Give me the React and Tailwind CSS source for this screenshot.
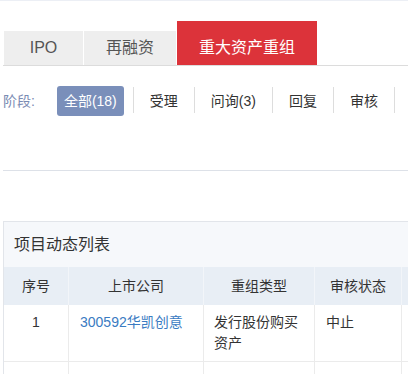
const font = { fontFamily: '"Liberation Sans", "Noto Sans CJK SC", sans-serif' };

const stages = ["受理", "问询(3)", "回复", "审核"];

export default function App() {
  return (
    <div className="h-[374px] w-[408px] overflow-hidden bg-white" style={font}>
      <div className="w-[640px] border-t border-[#eceff5] pl-[3px]">
        {/* tabs */}
        <div className="mt-[20px] flex items-end border-b border-[#dcdcdc] pl-px">
          <div className="mr-px h-[34px] w-[79px] bg-[#eeeeee] text-center text-[16px] leading-[34px] text-[#555]">
            IPO
          </div>
          <div className="mr-px h-[34px] w-[92px] bg-[#eeeeee] text-center text-[16px] leading-[34px] text-[#555]">
            再融资
          </div>
          <div className="h-[44px] w-[140px] bg-[#dc333a] pt-[10px] text-center text-[16px] leading-[34px] text-white">
            重大资产重组
          </div>
        </div>

        {/* stage filter */}
        <div className="mt-[20px] flex items-start text-[14px]">
          <span className="h-[30px] leading-[30px] text-[#7b8bb3]">阶段:</span>
          <span className="ml-[22px] h-[30px] rounded-[3px] bg-[#7a8fba] px-[7px] leading-[30px] text-white">
            全部(18)
          </span>
          <div className="ml-[9px] flex">
            {stages.map((s) => (
              <span
                key={s}
                className="mt-px h-[26px] border-l border-[#dddddd] px-4 leading-[28px] text-[#333]"
              >
                {s}
              </span>
            ))}
            <span className="mt-px h-[26px] border-l border-[#dddddd]" />
          </div>
        </div>

        <div className="mt-[54px] border-t border-[#dde1e8]" />

        {/* project list card */}
        <div className="mt-[50px] border border-[#e2e5ea]">
          <div className="h-[45px] bg-[#f6f8fb] pl-[10px] text-[16px] leading-[45px] text-[#333]">
            项目动态列表
          </div>
          <div className="grid grid-cols-[65px_135px_111px_87px_1fr] bg-[#e8eef5] text-center text-[14px] leading-[38px] text-[#333]">
            <div className="border-r border-[#f2f5f9]">序号</div>
            <div className="border-r border-[#f2f5f9]">上市公司</div>
            <div className="border-r border-[#f2f5f9]">重组类型</div>
            <div className="border-r border-[#f2f5f9]">审核状态</div>
            <div />
          </div>
          <div className="grid h-[57px] grid-cols-[65px_135px_111px_87px_1fr] border-b border-[#ebebeb] text-[14px] leading-[21px] text-[#333]">
            <div className="border-r border-[#ebebeb] pt-[7px] text-center">1</div>
            <div className="border-r border-[#ebebeb] px-[11px] pt-[7px] text-[#3a7bc2]">300592华凯创意</div>
            <div className="border-r border-[#ebebeb] px-[10px] pt-[7px]">发行股份购买资产</div>
            <div className="border-r border-[#ebebeb] px-[11px] pt-[7px]">中止</div>
            <div />
          </div>
          <div className="grid h-[57px] grid-cols-[65px_135px_111px_87px_1fr]">
            <div className="border-r border-[#ebebeb]" />
            <div className="border-r border-[#ebebeb]" />
            <div className="border-r border-[#ebebeb]" />
            <div className="border-r border-[#ebebeb]" />
            <div />
          </div>
        </div>
      </div>
    </div>
  );
}
